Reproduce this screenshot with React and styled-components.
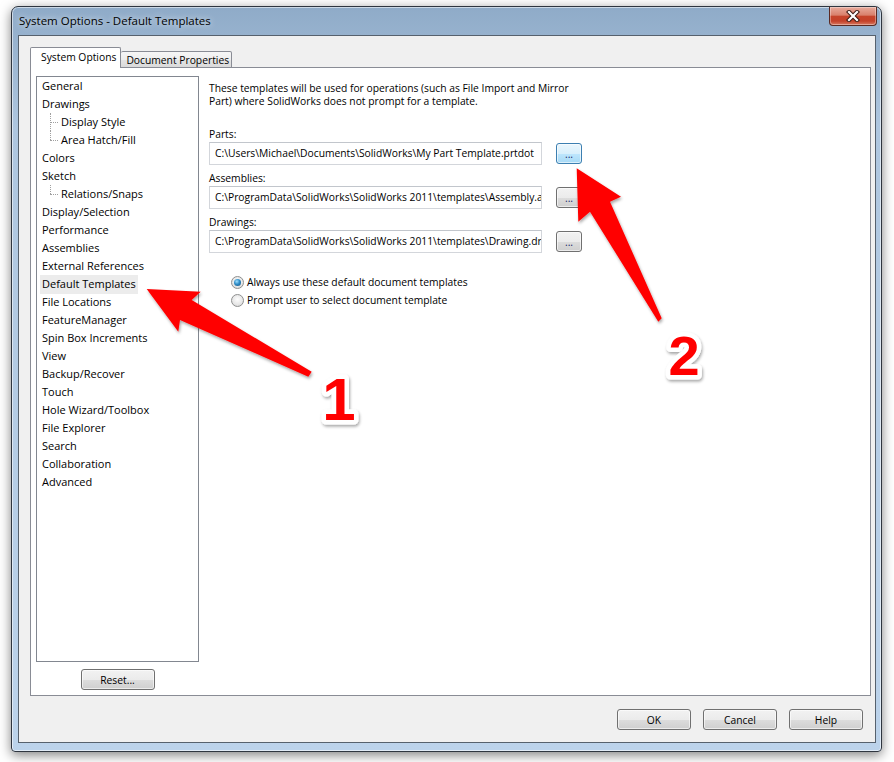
import React from "react";
import styled, { createGlobalStyle } from "styled-components";

const GlobalStyle = createGlobalStyle`
  html, body {
    margin: 0;
    padding: 0;
    background: #fff;
  }
  body {
    font-family: "Open Sans", "Noto Sans", sans-serif;
    font-size: 11px;
    color: #000;
    overflow: hidden;
  }
`;

const Page = styled.div`
  position: relative;
  width: 894px;
  height: 762px;
  padding: 6px 0 0 11px;
  box-sizing: border-box;
`;

const Window = styled.div`
  width: 871px;
  height: 746px;
  box-sizing: border-box;
  display: flex;
  flex-direction: column;
  padding: 0 5px 8px 6px;
  border: 1px solid #2f3640;
  border-radius: 7px 7px 4px 4px;
  background: linear-gradient(to bottom, #8fabc8 0px, #97b2ce 30px, #aec6df 120px, #bcd3eb 100%);
  box-shadow: 0 3px 12px rgba(0, 0, 0, 0.5), inset 0 0 0 1px rgba(255, 255, 255, 0.55);
`;

const TitleBar = styled.div`
  height: 28px;
  display: flex;
  align-items: flex-start;
  justify-content: space-between;
  padding-left: 1px;
`;

const TitleText = styled.span`
  line-height: 28px;
  font-size: 11.5px;
  color: #000;
  text-shadow: 0 0 6px rgba(255, 255, 255, 0.9);
`;

const CloseButton = styled.div`
  width: 46px;
  height: 18px;
  margin-right: -1px;
  display: flex;
  align-items: center;
  justify-content: center;
  border: 1px solid #5b2a22;
  border-top: none;
  border-radius: 0 0 4px 4px;
  background: linear-gradient(to bottom, #e8ab9c 0%, #d9806c 45%, #c6442b 52%, #c44129 78%, #d87a62 100%);
  box-shadow: inset 0 0 0 1px rgba(255, 255, 255, 0.35);
`;

const Client = styled.div`
  flex: 1;
  display: flex;
  flex-direction: column;
  padding: 11px 4px 12px 11px;
  border: 1px solid #56616d;
  background: #f0f0f0;
  box-sizing: border-box;
`;

const TabStrip = styled.div`
  height: 21px;
  margin-bottom: -1px;
  display: flex;
  align-items: flex-end;
  position: relative;
  z-index: 1;
`;

const Tab = styled.div`
  box-sizing: border-box;
  height: ${(p) => (p.$active ? "21px" : "17px")};
  padding: ${(p) => (p.$active ? "0 4px 0 10px" : "0 2px 0 5px")};
  line-height: ${(p) => (p.$active ? "19px" : "16px")};
  font-size: 10.3px;
  border: 1px solid #898c95;
  border-bottom: ${(p) => (p.$active ? "none" : "1px solid #898c95")};
  border-left: ${(p) => (p.$active ? "1px solid #898c95" : "none")};
  border-radius: 2px 2px 0 0;
  background: ${(p) =>
    p.$active ? "#fff" : "linear-gradient(to bottom, #f6f6f6 0%, #eeeeee 50%, #e4e4e4 51%, #dadada 100%)"};
  white-space: nowrap;
`;

const Panel = styled.div`
  width: 841px;
  height: 629px;
  box-sizing: border-box;
  display: flex;
  border: 1px solid #898c95;
  background: #fff;
`;

const Sidebar = styled.div`
  display: flex;
  flex-direction: column;
  align-items: center;
  padding: 8px 0 0 5px;
`;

const TreeBox = styled.div`
  width: 163px;
  height: 586px;
  box-sizing: border-box;
  border: 1px solid #828790;
  background: #fff;
`;

const TreeRow = styled.div`
  position: relative;
  height: 18px;
  line-height: 18px;
  padding-left: ${(p) => (p.$level ? 24 : 5)}px;
  white-space: nowrap;

  ${(p) =>
    p.$level &&
    `
    &::before {
      content: "";
      position: absolute;
      left: 13px;
      top: 0;
      height: ${p.$last ? "9px" : "18px"};
      border-left: 1px dotted #a0a0a0;
    }
    &::after {
      content: "";
      position: absolute;
      left: 13px;
      top: 9px;
      width: 8px;
      border-top: 1px dotted #a0a0a0;
    }
  `}
`;

const TreeLabel = styled.span`
  display: inline-block;
  height: 19px;
  margin-left: -2px;
  padding: 0 2px;
  background: ${(p) => (p.$selected ? "#ececec" : "transparent")};
`;

const PushButton = styled.div`
  width: ${(p) => p.$w || 74}px;
  height: 21px;
  box-sizing: border-box;
  display: flex;
  align-items: center;
  justify-content: center;
  border: 1px solid ${(p) => (p.$focused ? "#3c7fb1" : "#707070")};
  border-radius: 3px;
  background: ${(p) =>
    p.$focused
      ? "linear-gradient(to bottom, #eaf6fd 0%, #d9f0fc 50%, #bee6fd 51%, #a7d9f5 100%)"
      : "linear-gradient(to bottom, #f2f2f2 0%, #ebebeb 50%, #dddddd 51%, #cfcfcf 100%)"};
  box-shadow: inset 0 0 0 1px rgba(255, 255, 255, 0.6);
  color: ${(p) => (p.$dots ? "#1a2a6a" : "#000")};
  font-size: 10.3px;
`;

const ResetButton = styled(PushButton)`
  margin-top: 7px;
`;

const Content = styled.div`
  display: flex;
  flex-direction: column;
  padding: 14px 0 0 10px;
  font-size: 10.3px;
`;

const Description = styled.p`
  margin: 0;
  line-height: 13px;
`;

const Field = styled.div`
  margin-top: ${(p) => (p.$first ? 20 : 7)}px;
`;

const FieldLabel = styled.div`
  line-height: 13px;
  margin-bottom: 1px;
`;

const FieldRow = styled.div`
  display: flex;
  align-items: center;
  gap: 14px;
`;

const PathBox = styled.div`
  width: 333px;
  height: 23px;
  box-sizing: border-box;
  padding-left: 5px;
  line-height: 21px;
  border: 1px solid #d3d6db;
  border-top-color: #c2c6cc;
  background: #fff;
  white-space: nowrap;
  overflow: hidden;
`;

const RadioGroup = styled.div`
  margin: 20px 0 0 22px;
`;

const RadioRow = styled.div`
  display: flex;
  align-items: center;
  gap: 3px;
  height: 18px;
`;

const RadioMark = styled.span`
  position: relative;
  width: 13px;
  height: 13px;
  box-sizing: border-box;
  border-radius: 50%;
  border: 1px solid #8e8f8f;
  background: radial-gradient(circle at 50% 40%, #fdfdfd 0%, #e6e6e6 60%, #cfcfcf 100%);

  &::after {
    content: "";
    display: ${(p) => (p.$checked ? "block" : "none")};
    position: absolute;
    left: 2px;
    top: 2px;
    width: 7px;
    height: 7px;
    border-radius: 50%;
    background: radial-gradient(circle at 40% 35%, #9fe0ff 0%, #2f8dc8 45%, #154e7c 100%);
  }
`;

const Footer = styled.div`
  display: flex;
  justify-content: flex-end;
  gap: 12px;
  margin-top: 13px;
  padding-right: 8px;
`;

const Overlay = styled.svg`
  position: absolute;
  left: 0;
  top: 0;
  pointer-events: none;
`;

const tree = [
  { label: "General" },
  { label: "Drawings" },
  { label: "Display Style", level: 1 },
  { label: "Area Hatch/Fill", level: 1, last: true },
  { label: "Colors" },
  { label: "Sketch" },
  { label: "Relations/Snaps", level: 1, last: true },
  { label: "Display/Selection" },
  { label: "Performance" },
  { label: "Assemblies" },
  { label: "External References" },
  { label: "Default Templates", selected: true },
  { label: "File Locations" },
  { label: "FeatureManager" },
  { label: "Spin Box Increments" },
  { label: "View" },
  { label: "Backup/Recover" },
  { label: "Touch" },
  { label: "Hole Wizard/Toolbox" },
  { label: "File Explorer" },
  { label: "Search" },
  { label: "Collaboration" },
  { label: "Advanced" },
];

const fields = [
  { label: "Parts:", path: "C:\\Users\\Michael\\Documents\\SolidWorks\\My Part Template.prtdot", focused: true },
  { label: "Assemblies:", path: "C:\\ProgramData\\SolidWorks\\SolidWorks 2011\\templates\\Assembly.asmdot" },
  { label: "Drawings:", path: "C:\\ProgramData\\SolidWorks\\SolidWorks 2011\\templates\\Drawing.drwdot" },
];

const Annotations = () => (
  <Overlay width="894" height="762">
    <defs>
      <filter id="shade" x="-20%" y="-20%" width="140%" height="140%">
        <feDropShadow dx="1" dy="2" stdDeviation="1.5" floodColor="#000" floodOpacity="0.35" />
      </filter>
    </defs>
    <g fill="#ff0000" filter="url(#shade)">
      <polygon points="146.7,289 200.7,291.7 191.7,300 311.7,371.7 308.3,376.7 180,320 178.3,331.7" />
      <polygon points="576.7,168.3 621,196.7 610,201.7 661.7,318.3 658.3,321.7 590,211.7 578.3,221.7" />
    </g>
    <g
      fontFamily="'Liberation Sans', Arial, sans-serif"
      fontWeight="bold"
      fill="#ff0000"
      stroke="#fff"
      strokeWidth="9"
      strokeLinejoin="round"
      paintOrder="stroke"
      textAnchor="middle"
      filter="url(#shade)"
    >
      <text x="339" y="420" fontSize="60">1</text>
      <text x="684" y="375" fontSize="56">2</text>
    </g>
  </Overlay>
);

const App = () => {
  return (
    <Page>
      <GlobalStyle />
      <Window>
        <TitleBar>
          <TitleText>System Options - Default Templates</TitleText>
          <CloseButton>
            <svg width="14" height="12" viewBox="0 0 14 12">
              <path d="M3 2 L11 10 M11 2 L3 10" stroke="#3b1a14" strokeWidth="4.2" strokeLinecap="square" />
              <path d="M3 2 L11 10 M11 2 L3 10" stroke="#fff" strokeWidth="2.2" strokeLinecap="square" />
            </svg>
          </CloseButton>
        </TitleBar>
        <Client>
          <TabStrip>
            <Tab $active>System Options</Tab>
            <Tab>Document Properties</Tab>
          </TabStrip>
          <Panel>
            <Sidebar>
              <TreeBox>
                {tree.map((item) => (
                  <TreeRow key={item.label} $level={item.level} $last={item.last}>
                    <TreeLabel $selected={item.selected}>{item.label}</TreeLabel>
                  </TreeRow>
                ))}
              </TreeBox>
              <ResetButton>Reset...</ResetButton>
            </Sidebar>
            <Content>
              <Description>
                These templates will be used for operations (such as File Import and Mirror
                <br />
                Part) where SolidWorks does not prompt for a template.
              </Description>
              {fields.map((f, i) => (
                <Field key={f.label} $first={i === 0}>
                  <FieldLabel>{f.label}</FieldLabel>
                  <FieldRow>
                    <PathBox>{f.path}</PathBox>
                    <PushButton $w={26} $dots $focused={f.focused}>
                      ...
                    </PushButton>
                  </FieldRow>
                </Field>
              ))}
              <RadioGroup>
                <RadioRow>
                  <RadioMark $checked />
                  Always use these default document templates
                </RadioRow>
                <RadioRow>
                  <RadioMark />
                  Prompt user to select document template
                </RadioRow>
              </RadioGroup>
            </Content>
          </Panel>
          <Footer>
            <PushButton>OK</PushButton>
            <PushButton>Cancel</PushButton>
            <PushButton>Help</PushButton>
          </Footer>
        </Client>
      </Window>
      <Annotations />
    </Page>
  );
};

export default App;
